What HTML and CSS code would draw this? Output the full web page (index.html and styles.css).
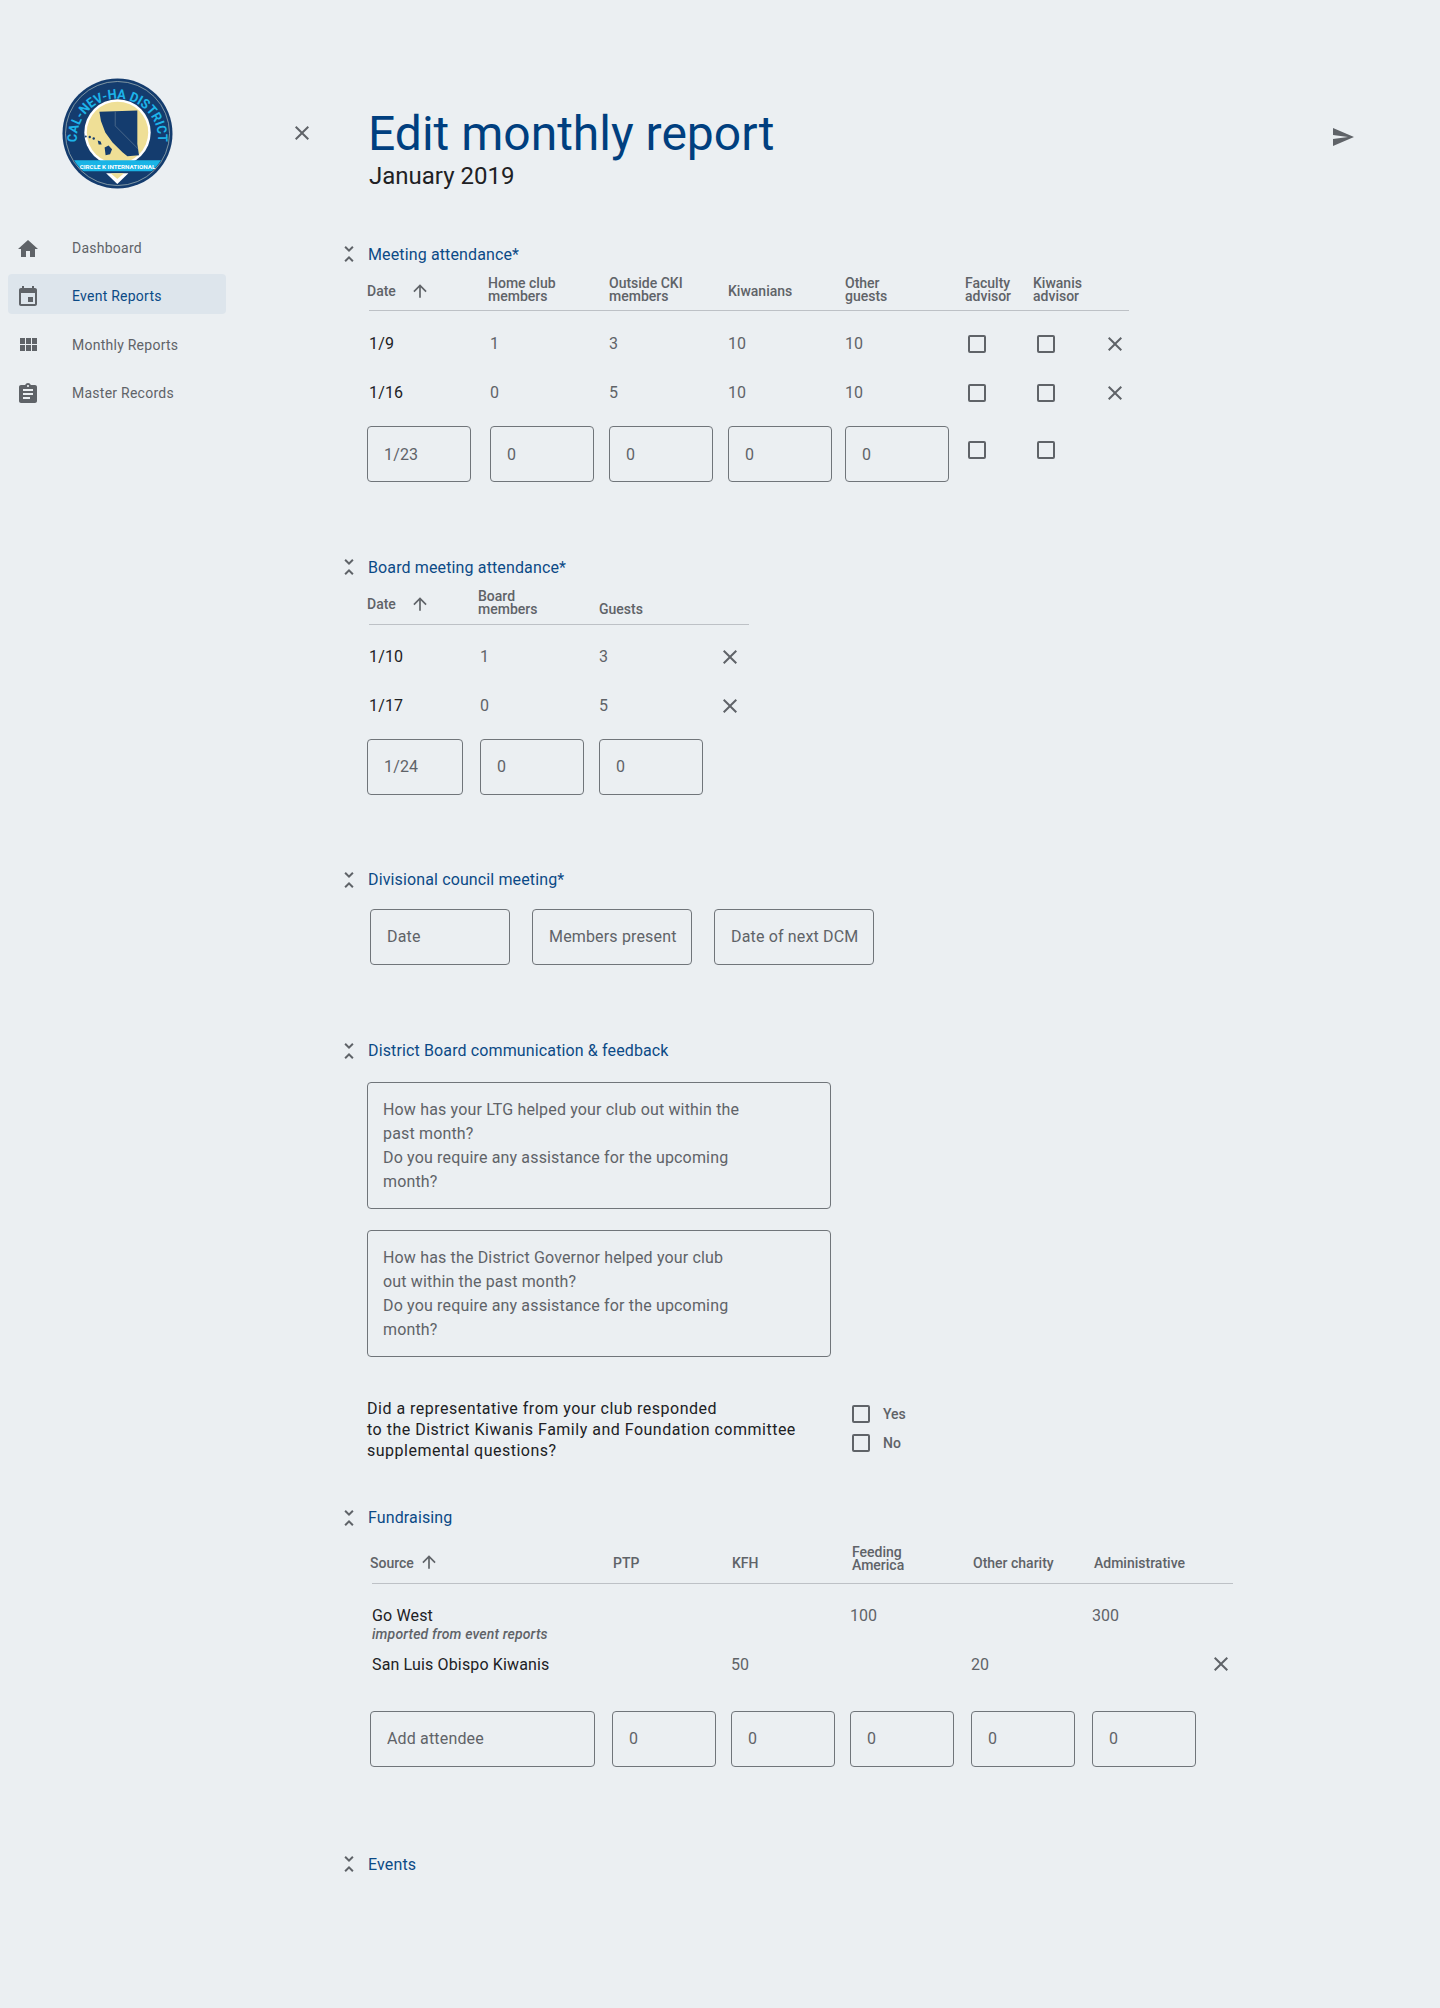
FILE: index.html
```html
<!DOCTYPE html>
<html lang="en">
<head>
    <meta charset="UTF-8">
    <meta name="viewport" content="width=device-width, initial-scale=1.0">
    <title>Edit monthly report</title>
    <link rel="stylesheet" href="styles.css">
</head>
<body>
    <svg class="sprite" width="0" height="0">
        <symbol id="i-close" viewBox="0 0 24 24"><path d="M19 6.41L17.59 5 12 10.59 6.41 5 5 6.41 10.59 12 5 17.59 6.41 19 12 13.41 17.59 19 19 17.59 13.41 12z"/></symbol>
        <symbol id="i-fold" viewBox="0 0 24 24"><path d="M7.41 18.59L8.83 20 12 16.83 15.17 20l1.41-1.41L12 14l-4.59 4.59zm9.18-13.18L15.17 4 12 7.17 8.83 4 7.41 5.41 12 10l4.59-4.59z"/></symbol>
        <symbol id="i-up" viewBox="0 0 24 24"><path d="M4 12l1.41 1.41L11 7.83V20h2V7.83l5.58 5.59L20 12l-8-8-8 8z"/></symbol>
    </svg>

    <div class="page">
        <aside class="sidebar">
            <svg class="logo" viewBox="0 0 112 112" role="img" aria-label="Cal-Nev-Ha District logo">
                <defs>
                    <path id="logo-arc" d="M15 62 A41 41 0 1 1 97 62"/>
                    <clipPath id="logo-clip"><circle cx="56" cy="56" r="51.5"/></clipPath>
                </defs>
                <circle cx="56" cy="56" r="55.5" fill="#143c6e"/>
                <circle cx="56" cy="56" r="52.5" fill="none" stroke="#c9d3c5" stroke-width=".6"/>
                <text class="logo-title" textLength="134" lengthAdjust="spacingAndGlyphs"><textPath href="#logo-arc" startOffset="50%" text-anchor="middle">CAL-NEV-HA DISTRICT</textPath></text>
                <circle cx="56" cy="55" r="33.5" fill="#fff"/>
                <circle cx="56" cy="55" r="31" fill="#efdf96"/>
                <path d="M37.7 34 L76 32.7 76 66.7 77.7 78 66 79 61 75 51 65 43.7 55 39.3 43.3z" fill="#143c6e"/>
                <path d="M53.7 34 V48.3 L77 71.7" fill="none" stroke="#7f93a6" stroke-width=".5"/>
                <path d="M43 70 L47 68 L50.5 72 L48.5 77 L44 78z M36 63 l3 1 1 3 -3 0z" fill="#143c6e"/>
                <circle cx="24" cy="59" r="1" fill="#143c6e"/>
                <circle cx="28" cy="59.5" r="1.2" fill="#143c6e"/>
                <circle cx="32" cy="61" r="1.2" fill="#143c6e"/>
                <path d="M3 83 H109 V94 H3z" fill="#19b4e6" clip-path="url(#logo-clip)"/>
                <path d="M44.5 96 H67 L55.8 107z" fill="#fff"/>
                <path d="M49 96 H62.5 L55.8 102z" fill="#efdf96"/>
                <text class="logo-band" x="56" y="91.5" text-anchor="middle">CIRCLE K INTERNATIONAL</text>
            </svg>
            <nav class="nav">
                <a class="nav-item" href="#">
                    <svg class="nav-icon" viewBox="0 0 24 24"><path d="M10 20v-6h4v6h5v-8h3L12 3 2 12h3v8z"/></svg>
                    Dashboard
                </a>
                <a class="nav-item active" href="#">
                    <svg class="nav-icon" viewBox="0 0 24 24"><path d="M17 12h-5v5h5v-5zM16 1v2H8V1H6v2H5c-1.11 0-1.99.9-1.99 2L3 19c0 1.1.89 2 2 2h14c1.1 0 2-.9 2-2V5c0-1.1-.9-2-2-2h-1V1h-2zm3 18H5V8h14v11z"/></svg>
                    Event Reports
                </a>
                <a class="nav-item" href="#">
                    <svg class="nav-icon" viewBox="0 0 24 24"><path d="M4 11h5V5H4v6zm0 7h5v-6H4v6zm6 0h5v-6h-5v6zm6 0h5v-6h-5v6zm-6-7h5V5h-5v6zm6-6v6h5V5h-5z"/></svg>
                    Monthly Reports
                </a>
                <a class="nav-item" href="#">
                    <svg class="nav-icon" viewBox="0 0 24 24"><path d="M19 3h-4.18C14.4 1.84 13.3 1 12 1c-1.3 0-2.4.84-2.82 2H5c-1.1 0-2 .9-2 2v14c0 1.1.9 2 2 2h14c1.1 0 2-.9 2-2V5c0-1.1-.9-2-2-2zm-7 0c.55 0 1 .45 1 1s-.45 1-1 1-1-.45-1-1 .45-1 1-1zm2 14H7v-2h7v2zm3-4H7v-2h10v2zm0-4H7V7h10v2z"/></svg>
                    Master Records
                </a>
            </nav>
        </aside>

        <main class="main">
            <header class="topbar">
                <svg class="icon close-page"><use href="#i-close"/></svg>
                <div class="titles">
                    <h1>Edit monthly report</h1>
                    <p class="month">January 2019</p>
                </div>
                <svg class="send" viewBox="0 0 24 24"><path d="M2.01 21L23 12 2.01 3 2 10l15 2-15 2z"/></svg>
            </header>

            <section class="block meeting">
                <h2 class="block-title"><svg class="icon"><use href="#i-fold"/></svg>Meeting attendance*</h2>
                <div class="table-head cols">
                    <div class="th single shift">Date<svg class="icon sort"><use href="#i-up"/></svg></div>
                    <div class="th shift">Home club<br>members</div>
                    <div class="th">Outside CKI<br>members</div>
                    <div class="th single">Kiwanians</div>
                    <div class="th">Other<br>guests</div>
                    <div class="th">Faculty<br>advisor</div>
                    <div class="th">Kiwanis<br>advisor</div>
                </div>
                <div class="rule"></div>
                <div class="rows">
                    <div class="row cols">
                        <span class="date">1/9</span><span>1</span><span>3</span><span>10</span><span>10</span>
                        <span><input class="check" type="checkbox"></span><span><input class="check" type="checkbox"></span>
                        <svg class="icon remove"><use href="#i-close"/></svg>
                    </div>
                    <div class="row cols">
                        <span class="date">1/16</span><span>0</span><span>5</span><span>10</span><span>10</span>
                        <span><input class="check" type="checkbox"></span><span><input class="check" type="checkbox"></span>
                        <svg class="icon remove"><use href="#i-close"/></svg>
                    </div>
                    <div class="row-inputs cols">
                        <input class="field" placeholder="1/23"><input class="field" placeholder="0"><input class="field" placeholder="0"><input class="field" placeholder="0"><input class="field" placeholder="0">
                        <span class="check-cell"><input class="check" type="checkbox"></span><span class="check-cell"><input class="check" type="checkbox"></span>
                    </div>
                </div>
            </section>

            <section class="block board">
                <h2 class="block-title"><svg class="icon"><use href="#i-fold"/></svg>Board meeting attendance*</h2>
                <div class="table-head cols">
                    <div class="th single shift">Date<svg class="icon sort"><use href="#i-up"/></svg></div>
                    <div class="th shift">Board<br>members</div>
                    <div class="th">Guests</div>
                </div>
                <div class="rule"></div>
                <div class="rows">
                    <div class="row cols">
                        <span class="date">1/10</span><span>1</span><span>3</span>
                        <svg class="icon remove"><use href="#i-close"/></svg>
                    </div>
                    <div class="row cols">
                        <span class="date">1/17</span><span>0</span><span>5</span>
                        <svg class="icon remove"><use href="#i-close"/></svg>
                    </div>
                    <div class="row-inputs cols">
                        <input class="field" placeholder="1/24"><input class="field" placeholder="0"><input class="field" placeholder="0">
                    </div>
                </div>
            </section>

            <section class="block council">
                <h2 class="block-title"><svg class="icon"><use href="#i-fold"/></svg>Divisional council meeting*</h2>
                <div class="council-fields">
                    <input class="field date-field" placeholder="Date">
                    <input class="field" placeholder="Members present">
                    <input class="field" placeholder="Date of next DCM">
                </div>
            </section>

            <section class="block feedback">
                <h2 class="block-title"><svg class="icon"><use href="#i-fold"/></svg>District Board communication &amp; feedback</h2>
                <textarea class="area" placeholder="How has your LTG helped your club out within the&#10;past month?&#10;Do you require any assistance for the upcoming&#10;month?"></textarea>
                <textarea class="area" placeholder="How has the District Governor helped your club&#10;out within the past month?&#10;Do you require any assistance for the upcoming&#10;month?"></textarea>
                <div class="question">
                    <p>Did a representative from your club responded<br>to the District Kiwanis Family and Foundation committee<br>supplemental questions?</p>
                    <div class="answers">
                        <label class="answer"><input class="check" type="checkbox">Yes</label>
                        <label class="answer"><input class="check" type="checkbox">No</label>
                    </div>
                </div>
            </section>

            <section class="block funds">
                <h2 class="block-title"><svg class="icon"><use href="#i-fold"/></svg>Fundraising</h2>
                <div class="table-head cols">
                    <div class="th single">Source<svg class="icon sort"><use href="#i-up"/></svg></div>
                    <div class="th single">PTP</div>
                    <div class="th single">KFH</div>
                    <div class="th">Feeding<br>America</div>
                    <div class="th single">Other charity</div>
                    <div class="th single">Administrative</div>
                </div>
                <div class="rule"></div>
                <div class="rows">
                    <div class="row source-row cols">
                        <div class="source"><span class="date">Go West</span><em>imported from event reports</em></div>
                        <span></span><span></span><span>100</span><span></span><span>300</span>
                    </div>
                    <div class="row cols">
                        <span class="date">San Luis Obispo Kiwanis</span><span></span><span>50</span><span></span><span>20</span><span></span>
                        <svg class="icon remove"><use href="#i-close"/></svg>
                    </div>
                    <div class="row-inputs cols">
                        <input class="field" placeholder="Add attendee"><input class="field" placeholder="0"><input class="field" placeholder="0"><input class="field" placeholder="0"><input class="field" placeholder="0"><input class="field" placeholder="0">
                    </div>
                </div>
            </section>

            <section class="block events">
                <h2 class="block-title"><svg class="icon"><use href="#i-fold"/></svg>Events</h2>
            </section>
        </main>
    </div>
</body>
</html>
```

FILE: styles.css
```css
* {
    box-sizing: border-box;
}
body {
    margin: 0;
    background: #ebeff2;
    color: #5f6368;
    font-family: Roboto, sans-serif;
    font-size: 16px;
}
.sprite {
    display: block;
    height: 0;
}
.icon {
    width: 24px;
    height: 24px;
    fill: #5f6368;
    flex: none;
}
.page {
    display: flex;
    min-height: 100vh;
}

/* sidebar */
.sidebar {
    width: 294px;
    flex: none;
    padding-top: 78px;
}
.logo {
    display: block;
    width: 111px;
    height: 111px;
    margin-left: 62px;
}
.logo-title {
    font-family: Roboto, sans-serif;
    font-size: 13.5px;
    font-weight: 700;
    fill: #1db4ea;
}
.logo-band {
    font-family: Roboto, sans-serif;
    font-size: 6.3px;
    font-weight: 700;
    fill: #fff;
}
.nav {
    display: flex;
    flex-direction: column;
    gap: 8.3px;
    margin: 37px 0 0 8px;
    width: 218px;
}
.nav-item {
    display: flex;
    align-items: center;
    gap: 32px;
    height: 40px;
    padding: 4px 0 0 8px;
    border-radius: 4px;
    color: #5f6368;
    font-size: 14px;
    letter-spacing: .25px;
    text-decoration: none;
}
.nav-item.active {
    background: #dde5ec;
    color: #0b4a86;
}
.nav-icon {
    width: 24px;
    height: 24px;
    margin-top: 1.5px;
    fill: #5f6368;
}

/* top of the page */
.main {
    flex: 1;
    padding-top: 106px;
}
.topbar {
    display: flex;
    align-items: flex-start;
    width: 1060.5px;
}
.close-page {
    margin: 15px 0 0 -4px;
}
.titles {
    flex: 1;
    margin-left: 54px;
}
h1 {
    margin: 0;
    color: #003f7f;
    font-size: 48px;
    font-weight: 400;
    line-height: 56px;
}
.month {
    margin: 0 0 0 1px;
    color: #202124;
    font-size: 24px;
    line-height: 28px;
}
.send {
    width: 24px;
    height: 24px;
    margin-top: 19px;
    fill: #5f6368;
}

/* sections */
.block {
    margin-top: 73px;
    padding-left: 73px;
}
.meeting {
    margin-top: 52px;
}
.block-title {
    display: flex;
    align-items: center;
    gap: 7px;
    height: 24px;
    margin: 0 0 0 -30px;
    color: #0b4a86;
    font-size: 16px;
    font-weight: 400;
    letter-spacing: .13px;
}
.cols {
    display: grid;
}
.meeting .cols {
    grid-template-columns: 123px 119px 119px 117px 120px 68px 74px 22px;
}
.board .cols {
    grid-template-columns: 113px 119px 123px 27px;
}
.funds .cols {
    grid-template-columns: 242px 119px 119px 121px 121px 122px 19px;
}
.funds {
    margin-top: 45px;
    padding-left: 76px;
}
.funds .block-title {
    margin-left: -33px;
}
.table-head {
    height: 44px;
    align-items: end;
    padding-bottom: 7px;
}
.board .table-head {
    height: 45px;
    padding-bottom: 8px;
}
.funds .table-head {
    height: 53px;
    padding-bottom: 11px;
}
.th {
    font-size: 14px;
    font-weight: 500;
    line-height: 13px;
}
.th.shift {
    margin-left: -2px;
}
.meeting .th:first-child,
.board .th:first-child {
    margin-left: 0;
}
.th.single {
    display: flex;
    align-items: center;
    margin-bottom: 5px;
}
.meeting .th:first-child,
.board .th:first-child {
    margin-bottom: 2px;
}
.funds .th.single {
    margin-bottom: 1.5px;
    margin-left: 2px;
}
.funds .th:first-child {
    margin-bottom: -.5px;
    margin-left: 0;
}
.funds .th:nth-child(2),
.funds .th:nth-child(3) {
    margin-left: 1px;
}
.funds .th:nth-child(4) {
    margin-left: 2px;
}
.sort {
    width: 20px;
    height: 20px;
    margin: -1px 0 0 14px;
}
.funds .sort {
    margin: -3px 0 0 5px;
}
.rule {
    height: 1px;
    margin-left: 2px;
    background: #bdc1c6;
}
.meeting .rule {
    width: 760px;
}
.board .rule {
    width: 380px;
}
.funds .rule {
    width: 861px;
}
.rows {
    margin-top: 8px;
}
.board .rows {
    margin-top: 7px;
}
.funds .rows {
    margin-top: 20px;
}
.row {
    height: 49px;
    align-items: center;
}
.row > span {
    display: block;
}
.date {
    padding-left: 2px;
    color: #202124;
    letter-spacing: .15px;
}
.row .check {
    margin-top: 1px;
}
.meeting .row > span:nth-child(n+6),
.check-cell {
    padding-left: 3px;
}
.meeting .row > span:nth-child(7),
.meeting .check-cell:nth-child(7) {
    padding-left: 4px;
}
.remove {
    margin-left: -4px;
}
.funds .remove {
    margin-left: -5px;
}
.source-row {
    height: auto;
    align-items: start;
}
.source-row > span {
    line-height: 24px;
}
.source {
    display: flex;
    flex-direction: column;
}
.source-row .date {
    line-height: 24px;
}
.source em {
    padding-left: 2px;
    font-size: 14px;
    font-weight: 500;
    line-height: 12px;
    letter-spacing: .15px;
}

/* inputs */
.field {
    width: 104px;
    height: 56px;
    padding: 0 0 0 16px;
    border: 1px solid #70757a;
    border-radius: 4px;
    background: transparent;
    font-family: Roboto, sans-serif;
    font-size: 16px;
    letter-spacing: .16px;
}
.field::placeholder,
.area::placeholder {
    color: #5f6368;
    opacity: 1;
}
.row-inputs {
    margin-top: 9px;
}
.board .row-inputs {
    margin-top: 8.5px;
}
.funds .row-inputs {
    margin-top: 22px;
}
.board .field:first-child {
    width: 96px;
}
.funds .field:first-child {
    width: 225px;
}
.check-cell {
    padding-top: 15px;
}
.check {
    appearance: none;
    display: block;
    width: 18px;
    height: 18px;
    margin: 0;
    border: 2px solid #5f6368;
    border-radius: 2px;
    background: transparent;
}
.council-fields {
    display: flex;
    gap: 22px;
    margin: 17px 0 0 3px;
}
.council-fields .field {
    width: 160px;
}
.council-fields .date-field {
    width: 140px;
}
.area {
    display: block;
    width: 464px;
    height: 127px;
    padding: 15px;
    border: 1px solid #70757a;
    border-radius: 4px;
    background: transparent;
    font-family: Roboto, sans-serif;
    font-size: 16px;
    line-height: 24px;
    letter-spacing: .16px;
    resize: none;
}
.feedback {
    padding-top: 1px;
}
.block-title + .area {
    margin-top: 19px;
}
.area + .area {
    margin-top: 21px;
}
.question {
    display: flex;
    margin-top: 41px;
}
.question p {
    width: 485px;
    margin: 0;
    color: #202124;
    font-size: 16px;
    line-height: 21px;
    letter-spacing: .5px;
}
.answers {
    display: flex;
    flex-direction: column;
    gap: 11px;
    margin-top: 7px;
}
.answer {
    display: flex;
    align-items: center;
    gap: 13px;
    font-size: 14px;
    font-weight: 500;
}
.events {
    margin-top: 85.5px;
}
```
